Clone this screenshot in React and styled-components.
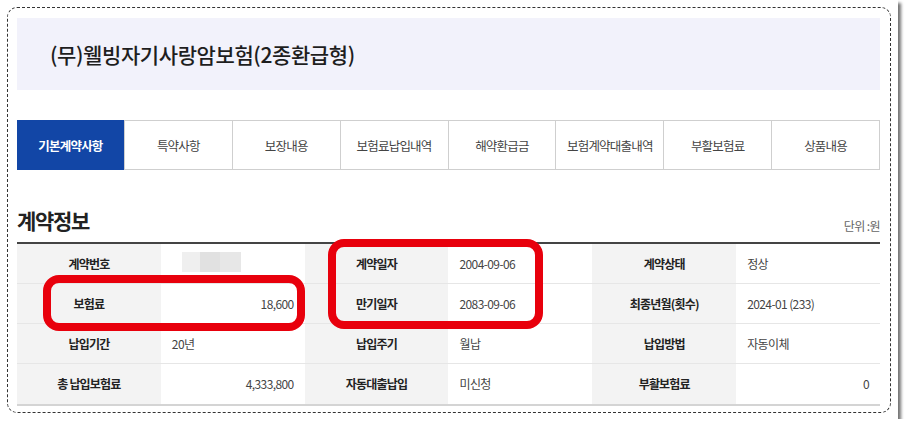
import styled, { createGlobalStyle } from "styled-components";

const GlobalStyle = createGlobalStyle`
  html, body {
    margin: 0;
    padding: 0;
    background: #ffffff;
  }
  body {
    font-family: "Noto Sans CJK KR", "Noto Sans", sans-serif;
    color: #222;
  }
  * {
    box-sizing: border-box;
  }
`;

const tabs = [
  "기본계약사항",
  "특약사항",
  "보장내용",
  "보험료납입내역",
  "해약환급금",
  "보험계약대출내역",
  "부활보험료",
  "상품내용",
];

const rows = [
  [
    { label: "계약번호", value: null, blur: true },
    { label: "계약일자", value: "2004-09-06" },
    { label: "계약상태", value: "정상" },
  ],
  [
    { label: "보험료", value: "18,600", right: true },
    { label: "만기일자", value: "2083-09-06" },
    { label: "최종년월(횟수)", value: "2024-01 (233)" },
  ],
  [
    { label: "납입기간", value: "20년" },
    { label: "납입주기", value: "월납" },
    { label: "납입방법", value: "자동이체" },
  ],
  [
    { label: "총 납입보험료", value: "4,333,800", right: true },
    { label: "자동대출납입", value: "미신청" },
    { label: "부활보험료", value: "0", right: true },
  ],
];

const Card = styled.div`
  width: 898px;
  height: 419px;
  background: #fff;
  box-shadow: 3px 3px 3px rgba(0, 0, 0, 0.55);
  padding: 7px 0 0 7px;
`;

const Frame = styled.div`
  width: 884px;
  height: 406px;
  border: 1px dashed #333;
  border-radius: 10px;
  padding: 10px 10px 0 9px;
`;

const TitleBox = styled.div`
  height: 72px;
  background: #f2f2fb;
  display: flex;
  align-items: center;
  padding-left: 33px;
`;

const Title = styled.h1`
  margin: 0;
  font-size: 21px;
  font-weight: 500;
  letter-spacing: -0.4px;
  color: #1e1e1e;
`;

const TabBar = styled.div`
  margin-top: 30px;
  height: 50px;
  display: flex;
  border: 1px solid #cfcfcf;
`;

const Tab = styled.div`
  flex: 1;
  display: flex;
  align-items: center;
  justify-content: center;
  font-size: 12.5px;
  letter-spacing: -0.8px;
  color: ${(p) => (p.$active ? "#fff" : "#444")};
  font-weight: ${(p) => (p.$active ? 700 : 400)};
  background: ${(p) => (p.$active ? "#1246a6" : "#fff")};
  border-left: 1px solid ${(p) => (p.$active ? "#1246a6" : "#cfcfcf")};
  margin: ${(p) => (p.$active ? "-1px 0 -1px -1px" : "0")};

  &:first-child {
    border-left: none;
  }
`;

const HeadRow = styled.div`
  margin-top: 36px;
  height: 28px;
  margin-bottom: 8px;
  display: flex;
  justify-content: space-between;
  align-items: flex-end;
`;

const Heading = styled.h2`
  margin: 0;
  font-size: 21px;
  line-height: 28px;
  font-weight: 700;
  letter-spacing: -1.3px;
  color: #222;
`;

const Unit = styled.span`
  font-size: 12px;
  line-height: 16px;
  letter-spacing: -0.6px;
  color: #666;
`;

const TableWrap = styled.div`
  position: relative;
`;

const Table = styled.div`
  display: grid;
  grid-template-columns: repeat(6, 1fr);
  border-top: 2px solid #444;
  border-bottom: 2px solid #d4d4d4;
`;

const Cell = styled.div`
  height: 40px;
  display: flex;
  align-items: center;
  font-size: 12px;
  border-bottom: 1px solid ${(p) => (p.$last ? "transparent" : "#e6e6e6")};
`;

const LabelCell = styled(Cell)`
  justify-content: center;
  background: #f3f3f3;
  font-weight: 700;
  color: #222;
  letter-spacing: -0.8px;
`;

const ValueCell = styled(Cell)`
  justify-content: ${(p) => (p.$right ? "flex-end" : "flex-start")};
  padding: 0 11px 0 11px;
  background: #fff;
  color: #444;
  letter-spacing: -0.6px;
`;

const Blurred = styled.span`
  width: 59px;
  height: 20px;
  margin-left: 10px;
  margin-top: -4px;
  background: linear-gradient(
    to right,
    #efefef 0 30%,
    #e1e1e1 30% 64%,
    #e7e7e7 64% 100%
  );
  filter: blur(0.6px);
`;

const Mark = styled.div`
  position: absolute;
  border: 8px solid #e8000c;
  border-radius: 16px;
  pointer-events: none;
`;

export default function App() {
  return (
    <>
      <GlobalStyle />
      <Card>
        <Frame>
          <TitleBox>
            <Title>(무)웰빙자기사랑암보험(2종환급형)</Title>
          </TitleBox>

          <TabBar>
            {tabs.map((t, i) => (
              <Tab key={t} $active={i === 0}>
                {t}
              </Tab>
            ))}
          </TabBar>

          <HeadRow>
            <Heading>계약정보</Heading>
            <Unit>단위 :원</Unit>
          </HeadRow>

          <TableWrap>
            <Table>
              {rows.map((row, r) =>
                row.map((c) => [
                  <LabelCell key={c.label} $last={r === rows.length - 1}>
                    {c.label}
                  </LabelCell>,
                  <ValueCell
                    key={c.label + "-v"}
                    $right={c.right}
                    $last={r === rows.length - 1}
                  >
                    {c.blur ? <Blurred /> : c.value}
                  </ValueCell>,
                ])
              )}
            </Table>
            {/* annotation boxes drawn over the table */}
            <Mark style={{ left: 26, top: 33, width: 262, height: 56 }} />
            <Mark style={{ left: 311, top: -3, width: 215, height: 90 }} />
          </TableWrap>
        </Frame>
      </Card>
    </>
  );
}
